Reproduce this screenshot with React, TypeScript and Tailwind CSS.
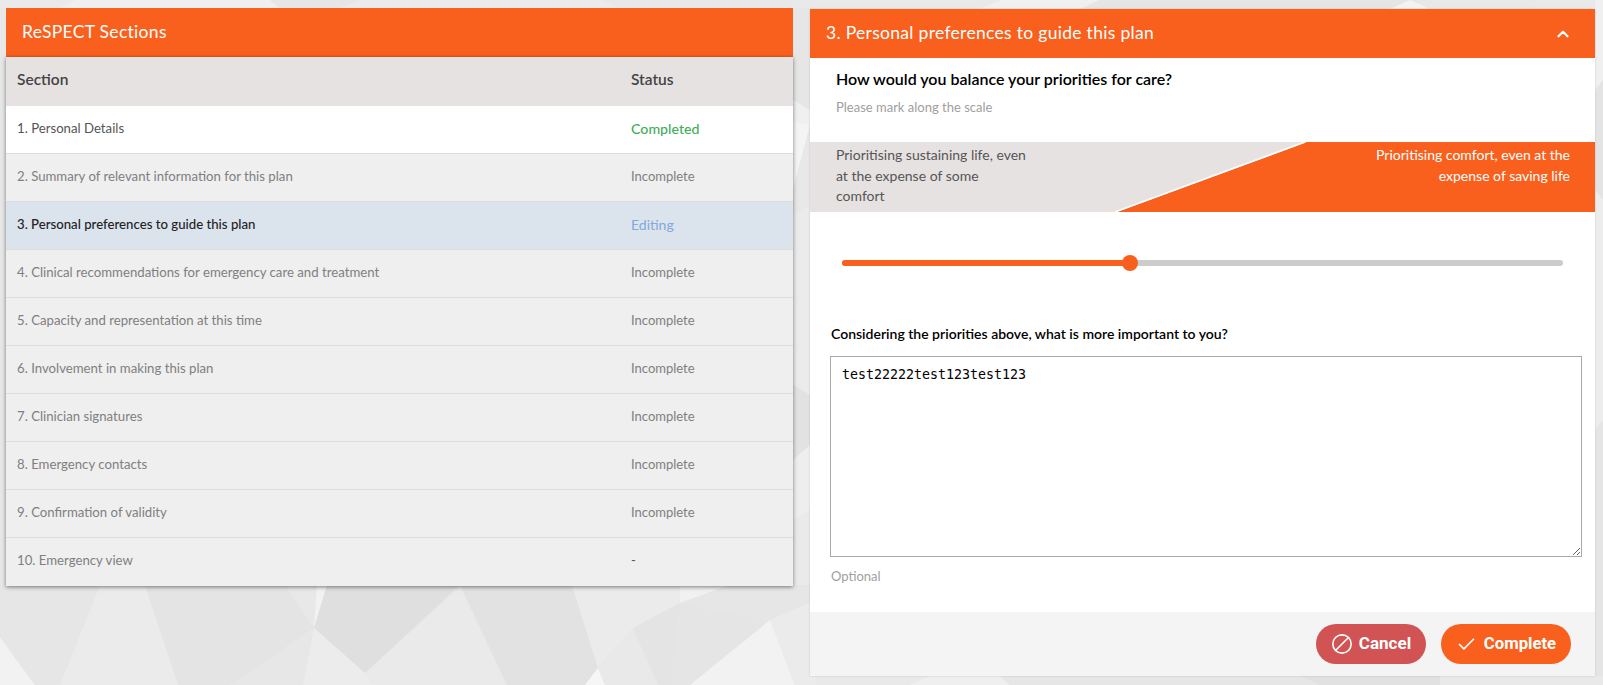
import { Ban, Check, ChevronUp } from "lucide-react";

const hind = "font-['Lato','Noto_Sans',sans-serif]";

const polys: [string, string][] = [
  ["0,637 35,685 0,685", "#f2f2f2"],
  ["0,585 100,585 60,685 35,685 0,637", "#e6e6e6"],
  ["100,585 145,585 178,685 60,685", "#ebebeb"],
  ["145,585 285,585 314,628 230,685 178,685", "#e4e4e4"],
  ["285,585 317,585 314,628", "#e8e8e8"],
  ["317,585 327,585 314,628", "#f2f2f2"],
  ["327,585 460,585 365,673 314,628", "#dfdfdf"],
  ["314,628 365,673 375,685 303,685", "#ececec"],
  ["230,685 314,628 303,685", "#e7e7e7"],
  ["365,673 460,587 507,685 375,685", "#eaeaea"],
  ["460,585 572,585 598,668 585,685 507,685", "#e2e2e2"],
  ["598,668 585,685 605,685", "#f6f6f6"],
  ["572,585 680,585 680,603 633,628 598,668", "#ebebeb"],
  ["633,628 598,668 605,685 658,685", "#e9e9e9"],
  ["633,628 680,603 672,685 658,685", "#e4e4e4"],
  ["680,603 770,620 690,685 672,685", "#e5e5e5"],
  ["680,585 730,585 680,603", "#f1f1f1"],
  ["730,585 816,585 816,600 770,620 680,603", "#e6e6e6"],
  ["770,620 795,685 690,685", "#f2f2f2"],
  ["770,620 816,600 816,685 795,685", "#ebebeb"],
  ["0,0 75,0 60,8 0,8", "#eaeaea"],
  ["75,0 270,0 280,8 60,8", "#efefef"],
  ["270,0 360,0 340,8 280,8", "#e6e6e6"],
  ["360,0 600,0 620,8 340,8", "#ebebeb"],
  ["793,0 1000,0 980,9 793,9", "#e9e9e9"],
  ["1000,0 1100,0 1080,9 980,9", "#f0f0f0"],
  ["1100,0 1410,0 1390,9 1080,9", "#e5e5e5"],
  ["1410,0 1430,9 1390,9", "#f3f3f3"],
  ["1520,0 1603,0 1603,9 1540,9", "#e9e9e9"],
  ["793,8 810,8 810,110 793,100", "#e6e6e6"],
  ["793,100 810,110 810,125 793,122", "#f0f0f0"],
  ["793,122 810,125 793,190", "#f4f4f4"],
  ["793,190 810,125 810,205 793,215", "#e8e8e8"],
  ["793,215 810,205 810,395 793,385", "#ebebeb"],
  ["793,385 810,395 810,445 793,460", "#e2e2e2"],
  ["793,460 810,445 810,510 793,520", "#eeeeee"],
  ["793,520 810,510 810,585 793,585", "#eaeaea"],
  ["1595,0 1603,0 1603,80 1595,90", "#f0f0f0"],
  ["1595,90 1603,80 1603,200 1595,190", "#e4e4e4"],
  ["1595,190 1603,200 1603,420 1595,430", "#ededed"],
  ["1595,430 1603,420 1603,685 1595,685", "#e5e5e5"],
  ["816,676 930,676 910,685 816,685", "#e9e9e9"],
  ["930,676 1000,676 1010,685 910,685", "#efefef"],
  ["1000,676 1300,676 1320,685 1010,685", "#e6e6e6"],
  ["1300,676 1440,676 1440,685 1320,685", "#e1e1e1"],
  ["1440,676 1603,676 1603,685 1440,685", "#e9e9e9"],
];

const rows: { n: string; s: string; tone: "done" | "edit" | "rest" }[] = [
  { n: "1. Personal Details", s: "Completed", tone: "done" },
  { n: "2. Summary of relevant information for this plan", s: "Incomplete", tone: "rest" },
  { n: "3. Personal preferences to guide this plan", s: "Editing", tone: "edit" },
  { n: "4. Clinical recommendations for emergency care and treatment", s: "Incomplete", tone: "rest" },
  { n: "5. Capacity and representation at this time", s: "Incomplete", tone: "rest" },
  { n: "6. Involvement in making this plan", s: "Incomplete", tone: "rest" },
  { n: "7. Clinician signatures", s: "Incomplete", tone: "rest" },
  { n: "8. Emergency contacts", s: "Incomplete", tone: "rest" },
  { n: "9. Confirmation of validity", s: "Incomplete", tone: "rest" },
  { n: "10. Emergency view", s: "-", tone: "rest" },
];

function Row({ n, s, tone }: { n: string; s: string; tone: "done" | "edit" | "rest" }) {
  const bg = tone === "done" ? "bg-white" : tone === "edit" ? "bg-[#dbe3ec]" : "bg-[#efefef]";
  const name =
    tone === "done" ? "text-[#555555]" : tone === "edit" ? "text-[#222222] font-medium" : "text-[#808080]";
  const status =
    tone === "done"
      ? "text-[#3fae5a] text-[14.2px] font-medium"
      : tone === "edit"
        ? "text-[#7fa9e0] text-[14px]"
        : s === "-"
          ? "text-[#555555] text-[13px]"
          : "text-[#808080] text-[13px]";
  return (
    <div className={`flex h-12 items-center border-b border-[#dddddd] last:border-b-0 ${bg}`}>
      <div className={`mb-[2px] w-[625px] shrink-0 pl-[11px] text-[13.2px] ${name}`}>{n}</div>
      <div className={`mb-[2px] ${status}`}>{s}</div>
    </div>
  );
}

export default function App() {
  return (
    <div className={`relative h-[685px] w-[1603px] overflow-hidden bg-[#e8e8e8] ${hind}`}>
      <svg
        className="absolute inset-0"
        width="1603"
        height="685"
        viewBox="0 0 1603 685"
        aria-hidden="true"
      >
        {polys.map(([points, fill], i) => (
          <polygon key={i} points={points} fill={fill} />
        ))}
      </svg>

      <div className="relative flex items-start gap-[17px] pl-[6px] pt-2">
        {/* Left panel */}
        <section className="w-[787px] shrink-0">
          <header className="flex h-[49px] items-center bg-[#f9601d] pl-[16px] text-[17.5px] tracking-[0.3px] text-white">
            ReSPECT Sections
          </header>
          <div className="shadow-[0_1px_4px_rgba(0,0,0,0.5)]">
            <div className="flex h-[49px] items-center bg-[#e6e2e1] pb-[3px] text-[15.5px] font-semibold text-[#444444]">
              <div className="w-[625px] shrink-0 pl-[11px]">Section</div>
              <div>Status</div>
            </div>
            {rows.map((r) => (
              <Row key={r.n} {...r} />
            ))}
          </div>
        </section>

        {/* Right panel */}
        <section className="mt-px w-[785px] shrink-0 shadow-[0_0_2px_rgba(0,0,0,0.15)]">
          <header className="flex h-[49px] items-center justify-between bg-[#f9601d] pl-[16px] pr-[23px] text-[17.5px] tracking-[0.3px] text-white">
            <span>3. Personal preferences to guide this plan</span>
            <ChevronUp size={18} strokeWidth={3} />
          </header>

          <div className="flex h-[554px] flex-col bg-white">
            <div className="pl-[26px] pt-[11px]">
              <h2 className="text-[16px] font-semibold leading-5 text-black">
                How would you balance your priorities for care?
              </h2>
              <p className="mt-2 text-[13px] leading-5 text-[#a0a0a0]">Please mark along the scale</p>
            </div>

            <div className="relative mt-[25px] h-[70px] shrink-0 bg-[#e6e2e1]">
              <svg
                className="absolute inset-0"
                width="785"
                height="70"
                viewBox="0 0 785 70"
                aria-hidden="true"
              >
                <polygon points="307,70 497,0 785,0 785,70" fill="#f9601d" />
                <line x1="305" y1="70" x2="495" y2="0" stroke="#ffffff" strokeWidth="1.5" />
              </svg>
              <div className="relative flex justify-between pl-[26px] pr-[25px] pt-[3px] text-[14px] leading-[20.5px]">
                <p className="w-[210px] text-[#555555]">
                  Prioritising sustaining life, even
                  <br />
                  at the expense of some
                  <br />
                  comfort
                </p>
                <p className="w-[210px] text-right text-white">
                  Prioritising comfort, even at the expense of saving life
                </p>
              </div>
            </div>

            <div className="relative ml-8 mt-[48px] h-[6px] w-[721px] shrink-0 rounded-full bg-[#cccccc]">
              <div className="h-full w-[288px] rounded-full bg-[#f9601d]" />
              <div className="absolute left-[280px] top-[-5px] h-4 w-4 rounded-full bg-[#f9601d]" />
            </div>

            <label className="ml-[21px] mt-[58px] block text-[14px] font-semibold leading-5 text-black">
              Considering the priorities above, what is more important to you?
            </label>
            <textarea
              readOnly
              defaultValue="test22222test123test123"
              className="ml-[20px] mt-[12px] block h-[201px] w-[752px] shrink-0 resize-y border border-[#a9a9a9] bg-white px-[11px] py-[9px] font-['DejaVu_Sans_Mono',monospace] text-[13.3px] leading-[17px] text-black outline-none"
            />
            <p className="ml-[21px] mt-[9px] text-[13px] leading-5 text-[#a0a0a0]">Optional</p>
          </div>

          <footer className="flex h-[64px] justify-end gap-[15px] bg-[#f4f4f4] pr-[24px] pt-[12px]">
            <button className="flex h-[40px] w-[110px] items-center justify-center gap-[6px] rounded-[20px] bg-[#d15353] font-['Roboto',sans-serif] text-[17px] font-bold text-white">
              <Ban size={22} strokeWidth={1.75} className="-scale-x-100" />
              Cancel
            </button>
            <button className="flex h-[40px] w-[130px] items-center justify-center gap-[7px] rounded-[20px] bg-[#f9601d] font-['Roboto',sans-serif] text-[16.7px] font-bold text-white">
              <Check size={21} strokeWidth={2} />
              Complete
            </button>
          </footer>
        </section>
      </div>
    </div>
  );
}
